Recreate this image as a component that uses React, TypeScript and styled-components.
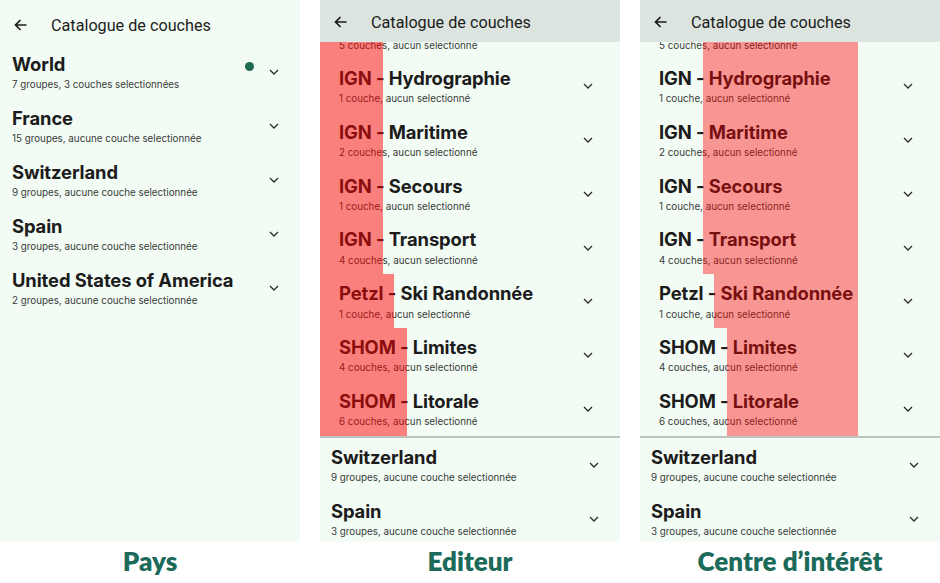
import React from "react";
import styled, { createGlobalStyle } from "styled-components";

const Global = createGlobalStyle`
  html, body { margin: 0; padding: 0; background: #ffffff; }
  body { font-family: Inter, "Noto Sans", sans-serif; -webkit-font-smoothing: antialiased; }
`;

const Page = styled.div`
  display: flex;
  gap: 20px;
  width: 940px;
  height: 583px;
  overflow: hidden;
`;

const Column = styled.div`
  width: 300px;
  display: flex;
  flex-direction: column;
`;

const Phone = styled.div`
  height: 542px;
  flex: none;
  background: #f3fbf5;
  display: flex;
  flex-direction: column;
  overflow: hidden;
`;

const Header = styled.div<{ $scrolled?: boolean; $height: number; $padTop: number }>`
  height: ${(p) => p.$height}px;
  box-sizing: border-box;
  padding: ${(p) => p.$padTop}px 0 0 14px;
  flex: none;
  display: flex;
  align-items: center;
  background: ${(p) => (p.$scrolled ? "#dbe4de" : "transparent")};
  position: relative;
  z-index: 2;
`;

const BackIcon = styled.svg`
  width: 13px;
  height: 12px;
  flex: none;
`;

const HeaderTitle = styled.h1`
  margin: 0 0 0 24px;
  font-family: Roboto, "Noto Sans", sans-serif;
  font-size: 16.2px;
  font-weight: 400;
  color: #1c1d1c;
`;

const Content = styled.div`
  flex: 1;
  overflow: hidden;
  position: relative;
`;

const Scroller = styled.div<{ $offset: number }>`
  margin-top: ${(p) => -p.$offset}px;
`;

const Row = styled.div<{ $indent: number; $right: number; $h: number }>`
  position: relative;
  display: flex;
  align-items: center;
  height: ${(p) => p.$h}px;
  box-sizing: border-box;
  padding: 0 ${(p) => p.$right}px 0 ${(p) => p.$indent}px;
`;

const RowText = styled.div`
  flex: 1;
  min-width: 0;
`;

const RowTitle = styled.div`
  font-size: 18.4px;
  font-weight: 650;
  line-height: 24px;
  color: #1b1c1b;
  white-space: nowrap;
  letter-spacing: -0.1px;
`;

const RowSub = styled.div`
  font-size: 9.8px;
  line-height: 14px;
  margin-top: 2.5px;
  color: #383c39;
  white-space: nowrap;
`;

const Dot = styled.span`
  width: 9px;
  height: 9px;
  border-radius: 50%;
  background: #1d6b51;
  margin: 0 14px 12px 0;
  flex: none;
`;

const ChevronIcon = styled.svg`
  width: 12px;
  height: 12px;
  flex: none;
`;

const Highlight = styled.div<{ $alpha: number }>`
  position: absolute;
  top: 0;
  bottom: 0;
  background: rgba(255, 0, 0, ${(p) => p.$alpha});
  pointer-events: none;
`;

const Divider = styled.div`
  height: 2px;
  background: #bdc5bf;
`;

const Caption = styled.div`
  flex: 1;
  display: flex;
  align-items: center;
  justify-content: center;
  font-family: Lato, "Open Sans", sans-serif;
  font-weight: 800;
  font-size: 26px;
  color: #1b6a5a;
  padding-bottom: 3px;
`;

const Back = () => (
  <BackIcon viewBox="0 0 13 12" fill="none">
    <path d="M12.5 6H1.5M6.5 1L1.5 6l5 5" stroke="#1c1d1c" strokeWidth="1.7" />
  </BackIcon>
);

const Chevron = () => (
  <ChevronIcon viewBox="0 0 12 12" fill="none">
    <path d="M2 4l4 4 4-4" stroke="#2a2d2b" strokeWidth="1.3" />
  </ChevronIcon>
);

type Country = { name: string; sub: string; dot?: boolean };
type Group = { prefix: string; name: string; sub: string };

const countries: Country[] = [
  { name: "World", sub: "7 groupes, 3 couches selectionnées", dot: true },
  { name: "France", sub: "15 groupes, aucune couche selectionnée" },
  { name: "Switzerland", sub: "9 groupes, aucune couche selectionnée" },
  { name: "Spain", sub: "3 groupes, aucune couche selectionnée" },
  { name: "United States of America", sub: "2 groupes, aucune couche selectionnée" },
];

const groups: Group[] = [
  { prefix: "IGN", name: "Cartes", sub: "5 couches, aucun selectionné" },
  { prefix: "IGN", name: "Hydrographie", sub: "1 couche, aucun selectionné" },
  { prefix: "IGN", name: "Maritime", sub: "2 couches, aucun selectionné" },
  { prefix: "IGN", name: "Secours", sub: "1 couche, aucun selectionné" },
  { prefix: "IGN", name: "Transport", sub: "4 couches, aucun selectionné" },
  { prefix: "Petzl", name: "Ski Randonnée", sub: "1 couche, aucun selectionné" },
  { prefix: "SHOM", name: "Limites", sub: "4 couches, aucun selectionné" },
  { prefix: "SHOM", name: "Litorale", sub: "6 couches, aucun selectionné" },
];

const prefixEnd: Record<string, number> = { IGN: 63, Petzl: 74, SHOM: 87 };

const CountryRow = ({ c, indent, h }: { c: Country; indent: number; h: number }) => (
  <Row $indent={indent} $right={20} $h={h}>
    <RowText>
      <RowTitle>{c.name}</RowTitle>
      <RowSub>{c.sub}</RowSub>
    </RowText>
    {c.dot && <Dot />}
    <Chevron />
  </Row>
);

const CountryPanel = () => (
  <Phone>
    <Header $height={45} $padTop={5}>
      <Back />
      <HeaderTitle>Catalogue de couches</HeaderTitle>
    </Header>
    <Content>
      {countries.map((c) => (
        <CountryRow key={c.name} c={c} indent={12} h={54} />
      ))}
    </Content>
  </Phone>
);

const GroupPanel = ({ mode }: { mode: "editor" | "topic" }) => (
  <Phone>
    <Header $scrolled $height={42} $padTop={2}>
      <Back />
      <HeaderTitle>Catalogue de couches</HeaderTitle>
    </Header>
    <Content>
      <Scroller $offset={36.5}>
        {groups.map((g) => {
          const end = prefixEnd[g.prefix];
          const style =
            mode === "editor"
              ? { left: 0, width: end }
              : { left: end, width: 218 - end };
          return (
            <Row key={g.name} $indent={19} $right={26} $h={53.8}>
              <RowText>
                <RowTitle>
                  {g.prefix} - {g.name}
                </RowTitle>
                <RowSub>{g.sub}</RowSub>
              </RowText>
              <Chevron />
              <Highlight $alpha={mode === "editor" ? 0.49 : 0.4} style={style} />
            </Row>
          );
        })}
        <Divider />
        <CountryRow c={countries[2]} indent={11} h={54} />
        <CountryRow c={countries[3]} indent={11} h={54} />
      </Scroller>
    </Content>
  </Phone>
);

export default function App() {
  return (
    <>
      <Global />
      <Page>
        <Column>
          <CountryPanel />
          <Caption>Pays</Caption>
        </Column>
        <Column>
          <GroupPanel mode="editor" />
          <Caption>Editeur</Caption>
        </Column>
        <Column>
          <GroupPanel mode="topic" />
          <Caption>Centre d’intérêt</Caption>
        </Column>
      </Page>
    </>
  );
}
